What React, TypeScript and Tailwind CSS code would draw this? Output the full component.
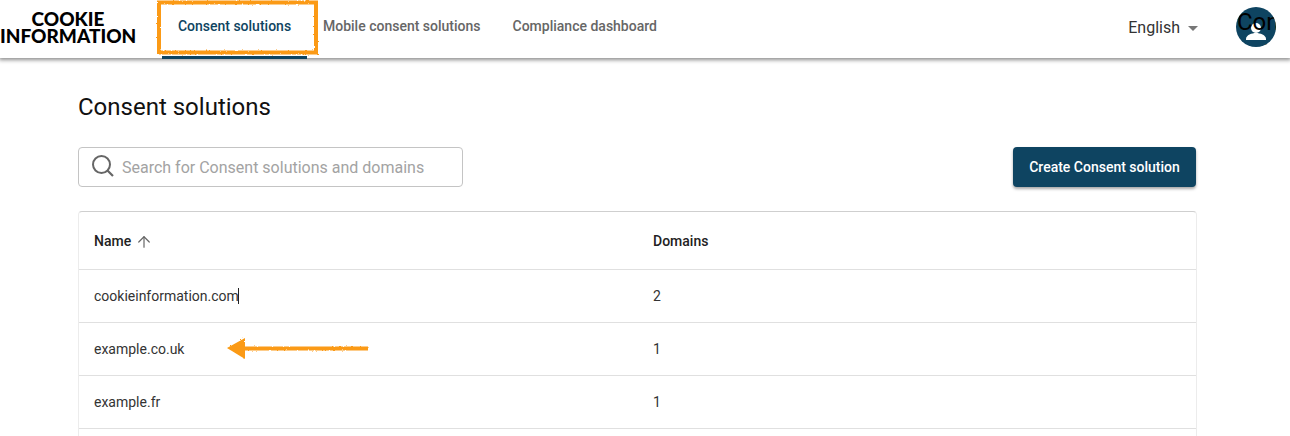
import { ArrowUp } from "lucide-react";

const navy = "bg-[#0e4461]";

const rows = [
  { name: "cookieinformation.com", domains: 2 },
  { name: "example.co.uk", domains: 1 },
  { name: "example.fr", domains: 1 },
  { name: "", domains: null },
];

const Header = () => (
  <header className="relative z-10 flex h-[58px] items-center bg-white shadow-[0_1px_4px_1px_rgba(0,0,0,0.45)]">
    <div className="w-[162px] shrink-0 pb-[4px] font-['Lato'] text-[19px] leading-[17px] font-black text-black">
      <div className="w-[136px] text-center">COOKIE</div>
      <div className="w-[136px] text-center">INFORMATION</div>
    </div>
    <nav className="flex h-full text-[14px] font-medium text-[#666]">
      <div className="relative flex w-[145px] items-center justify-center pb-[5px] text-[#0e4461]">
        Consent solutions
        <div className={`absolute right-0 bottom-[-1px] left-0 h-[3px] ${navy}`} />
      </div>
      <div className="ml-[16px] flex items-center pb-[5px]">Mobile consent solutions</div>
      <div className="ml-[32px] flex items-center pb-[5px]">Compliance dashboard</div>
    </nav>
    <div className="ml-auto flex items-center pr-[14px]">
      <span className="pb-[2px] pl-[1px] text-[16px] text-[#333]">English</span>
      <span className="mt-[-1px] ml-[8px] h-0 w-0 border-x-[5px] border-t-[5px] border-x-transparent border-t-[#777]" />
      <div className={`relative mb-[4px] ml-[38px] h-[40px] w-[40px] overflow-hidden rounded-full ${navy}`}>
        <svg viewBox="0 0 40 40" className="absolute inset-0 h-[40px] w-[40px]" fill="white">
          <circle cx="20" cy="21" r="5" />
          <path d="M10 33v-1c0-4 6-6 10-6s10 2 10 6v1z" />
        </svg>
        <span className="absolute top-[0px] left-[1px] text-[24px] leading-[30px] text-black">Con</span>
        <span className="absolute top-[32px] left-[15px] text-[24px] leading-[30px] text-black">el</span>
      </div>
    </div>
  </header>
);

const App = () => {
  return (
    <div className="relative h-[436px] w-[1290px] overflow-hidden bg-white font-['Roboto',sans-serif]">
      <Header />
      <main className="pr-[93px] pl-[78px]">
        <h1 className="mt-[34px] text-[24px] leading-[30px] text-[#111]">Consent solutions</h1>
        <div className="mt-[25px] flex items-center justify-between">
          <div className="flex h-[40px] w-[385px] items-center rounded-[4px] border border-[#c4c4c4] pl-[12px]">
            <svg width="24" height="24" viewBox="0 0 24 24" fill="none" stroke="#666" className="mt-[-2px]">
              <circle cx="10.5" cy="10.5" r="8.5" strokeWidth="2" />
              <path d="M16.5 16.5 L22 22" strokeWidth="2.2" />
            </svg>
            <span className="ml-[7px] pt-[1px] text-[16px] text-[#a3a3a3]">Search for Consent solutions and domains</span>
          </div>
          <button className={`mr-[1px] flex h-[40px] w-[183px] items-center justify-center rounded-[4px] text-[14px] font-medium text-white shadow-[0_2px_3px_rgba(0,0,0,0.35)] ${navy}`}>
            Create Consent solution
          </button>
        </div>
        <div className="mt-[24px] rounded-t-[4px] border-x border-t border-x-[#ececec] border-t-[#cfcfcf] text-[14px] text-[#333]">
          <div className="flex h-[58px] items-center border-b border-[#e0e0e0] pt-[2px] font-medium text-[#222]">
            <div className="flex w-[574px] items-center pl-[15px]">
              Name
              <ArrowUp className="ml-[4px] h-[18px] w-[18px] text-[#666]" strokeWidth={1.6} />
            </div>
            <div>Domains</div>
          </div>
          {rows.map((row) => (
            <div key={row.name} className="flex h-[53px] items-center border-b border-[#e0e0e0]">
              <div className="w-[574px] pl-[15px]">{row.name}</div>
              <div>{row.domains}</div>
            </div>
          ))}
        </div>
      </main>

      {/* hand drawn annotations on top of the screenshot */}
      <svg className="absolute top-0 left-0 z-20" width="1290" height="436" viewBox="0 0 1290 436" fill="none">
        <defs>
          <filter id="rough" x="-5%" y="-20%" width="110%" height="140%">
            <feTurbulence type="fractalNoise" baseFrequency="0.5" numOctaves="2" seed="3" />
            <feDisplacementMap in="SourceGraphic" scale="2.5" />
          </filter>
        </defs>
        <g filter="url(#rough)">
          <rect x="159" y="2.5" width="157" height="50" stroke="#fb9a12" strokeWidth="4" />
          <path d="M227 348 L245 338 L245 359 Z" fill="#fb9a12" />
          <path d="M243 348.5 H368" stroke="#fb9a12" strokeWidth="4" />
        </g>
      </svg>
      <div className="absolute top-[288px] left-[238px] z-20 h-[16px] w-px bg-[#222]" />
    </div>
  );
};

export default App;
